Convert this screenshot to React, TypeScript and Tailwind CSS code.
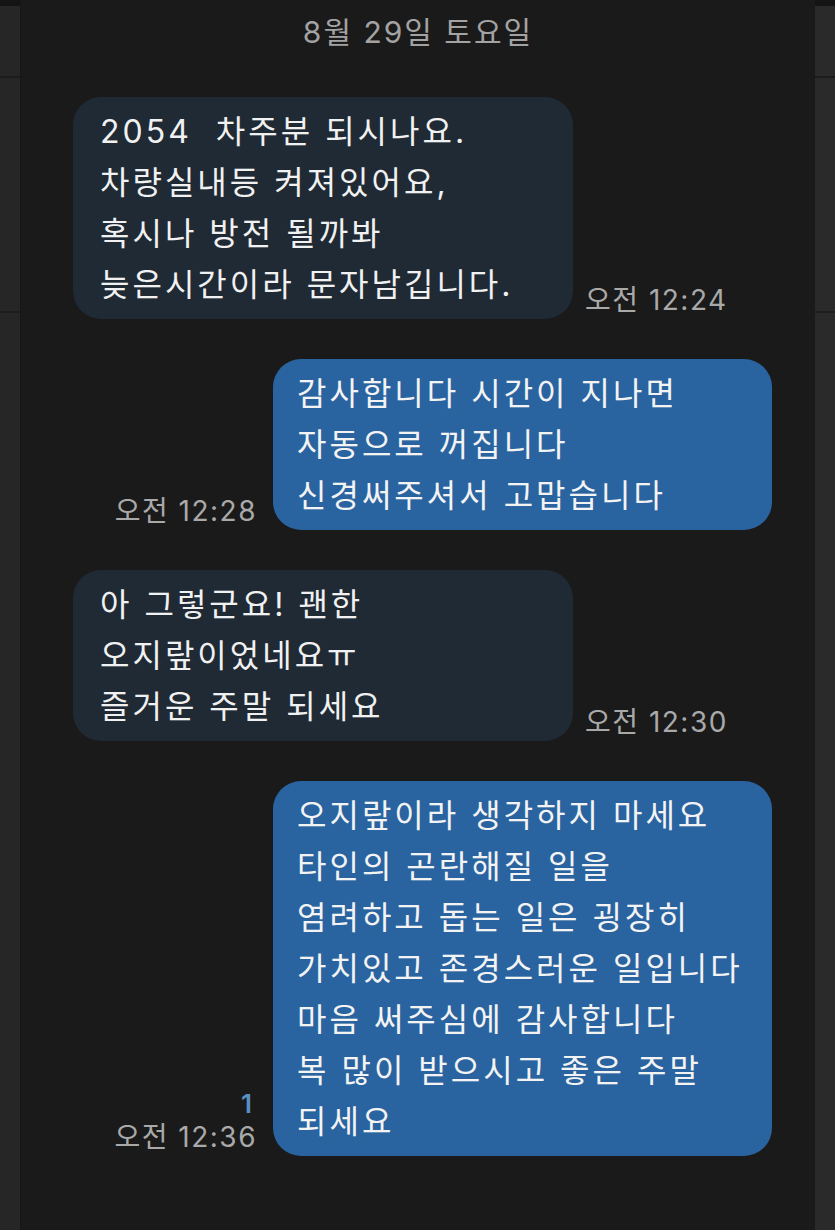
import React from "react";

const FONT = "font-['Inter','Noto_Sans_CJK_KR',sans-serif]";

type Msg = {
  side: "in" | "out";
  lines: string[];
  time: string;
  unread?: string;
};

const messages: Msg[] = [
  {
    side: "in",
    lines: ["2054  차주분 되시나요.", "차량실내등 켜져있어요,", "혹시나 방전 될까봐", "늦은시간이라 문자남깁니다."],
    time: "오전 12:24",
  },
  {
    side: "out",
    lines: ["감사합니다 시간이 지나면", "자동으로 꺼집니다", "신경써주셔서 고맙습니다"],
    time: "오전 12:28",
  },
  {
    side: "in",
    lines: ["아 그렇군요! 괜한", "오지랖이었네요ㅠ", "즐거운 주말 되세요"],
    time: "오전 12:30",
  },
  {
    side: "out",
    lines: [
      "오지랖이라 생각하지 마세요",
      "타인의 곤란해질 일을",
      "염려하고 돕는 일은 굉장히",
      "가치있고 존경스러운 일입니다",
      "마음 써주심에 감사합니다",
      "복 많이 받으시고 좋은 주말",
      "되세요",
    ],
    time: "오전 12:36",
    unread: "1",
  },
];

function Bubble({ msg }: { msg: Msg }) {
  const incoming = msg.side === "in";
  return (
    <div
      className={
        incoming
          ? "w-[500px] rounded-[28px] bg-[#1f2a35] pl-[27px] pr-2 py-[9px] text-[32px] leading-[51px] tracking-[3px] text-[#f1f1f1]"
          : "w-[499px] rounded-[28px] bg-[#2963a0] pl-[24px] pr-2 py-[9px] text-[32px] leading-[51px] tracking-[3px] text-[#f3f3f3]"
      }
    >
      {msg.lines.map((l, i) => (
        <div key={i} className="whitespace-pre">
          {l}
        </div>
      ))}
    </div>
  );
}

function Meta({ msg }: { msg: Msg }) {
  return (
    <div className="flex flex-col items-end pb-[3px]">
      {msg.unread && (
        <span className="mb-[2px] pr-[5px] text-[26px] font-semibold leading-[30px] text-[#5a8fc2]">{msg.unread}</span>
      )}
      <span className="whitespace-nowrap text-[28px] leading-[32px] tracking-[1.5px] text-[#a9a9a9]">{msg.time}</span>
    </div>
  );
}

function SideStrip({ tone }: { tone: string }) {
  return (
    <div className={`flex w-[20px] flex-col ${tone}`}>
      <div className="h-[6px] bg-[#141414]" />
      <div className="h-[72px] border-b-2 border-[#1c1c1c]" />
      <div className="h-[235px] border-b-2 border-[#1e1e1e]" />
      <div className="flex-1" />
    </div>
  );
}

export default function App() {
  return (
    <div className={`flex h-[1230px] w-[835px] overflow-hidden bg-[#1a1a1a] ${FONT}`}>
      <SideStrip tone="bg-[#262626]" />
      <main className="flex flex-1 flex-col border-l border-[#161616]">
        <header className="flex h-[64px] items-center justify-center text-[30px] tracking-[2px] text-[#a3a3a3]">
          8월 29일 토요일
        </header>
        <div className="mt-[33px] flex flex-col gap-[40px]">
          {messages.map((m, i) =>
            m.side === "in" ? (
              <div key={i} className="flex items-end gap-[12px] pl-[52px]">
                <Bubble msg={m} />
                <Meta msg={m} />
              </div>
            ) : (
              <div key={i} className="flex items-end justify-end gap-[16px] pr-[43px]">
                <Meta msg={m} />
                <Bubble msg={m} />
              </div>
            )
          )}
        </div>
      </main>
      <SideStrip tone="bg-[#2a2a2a]" />
    </div>
  );
}
